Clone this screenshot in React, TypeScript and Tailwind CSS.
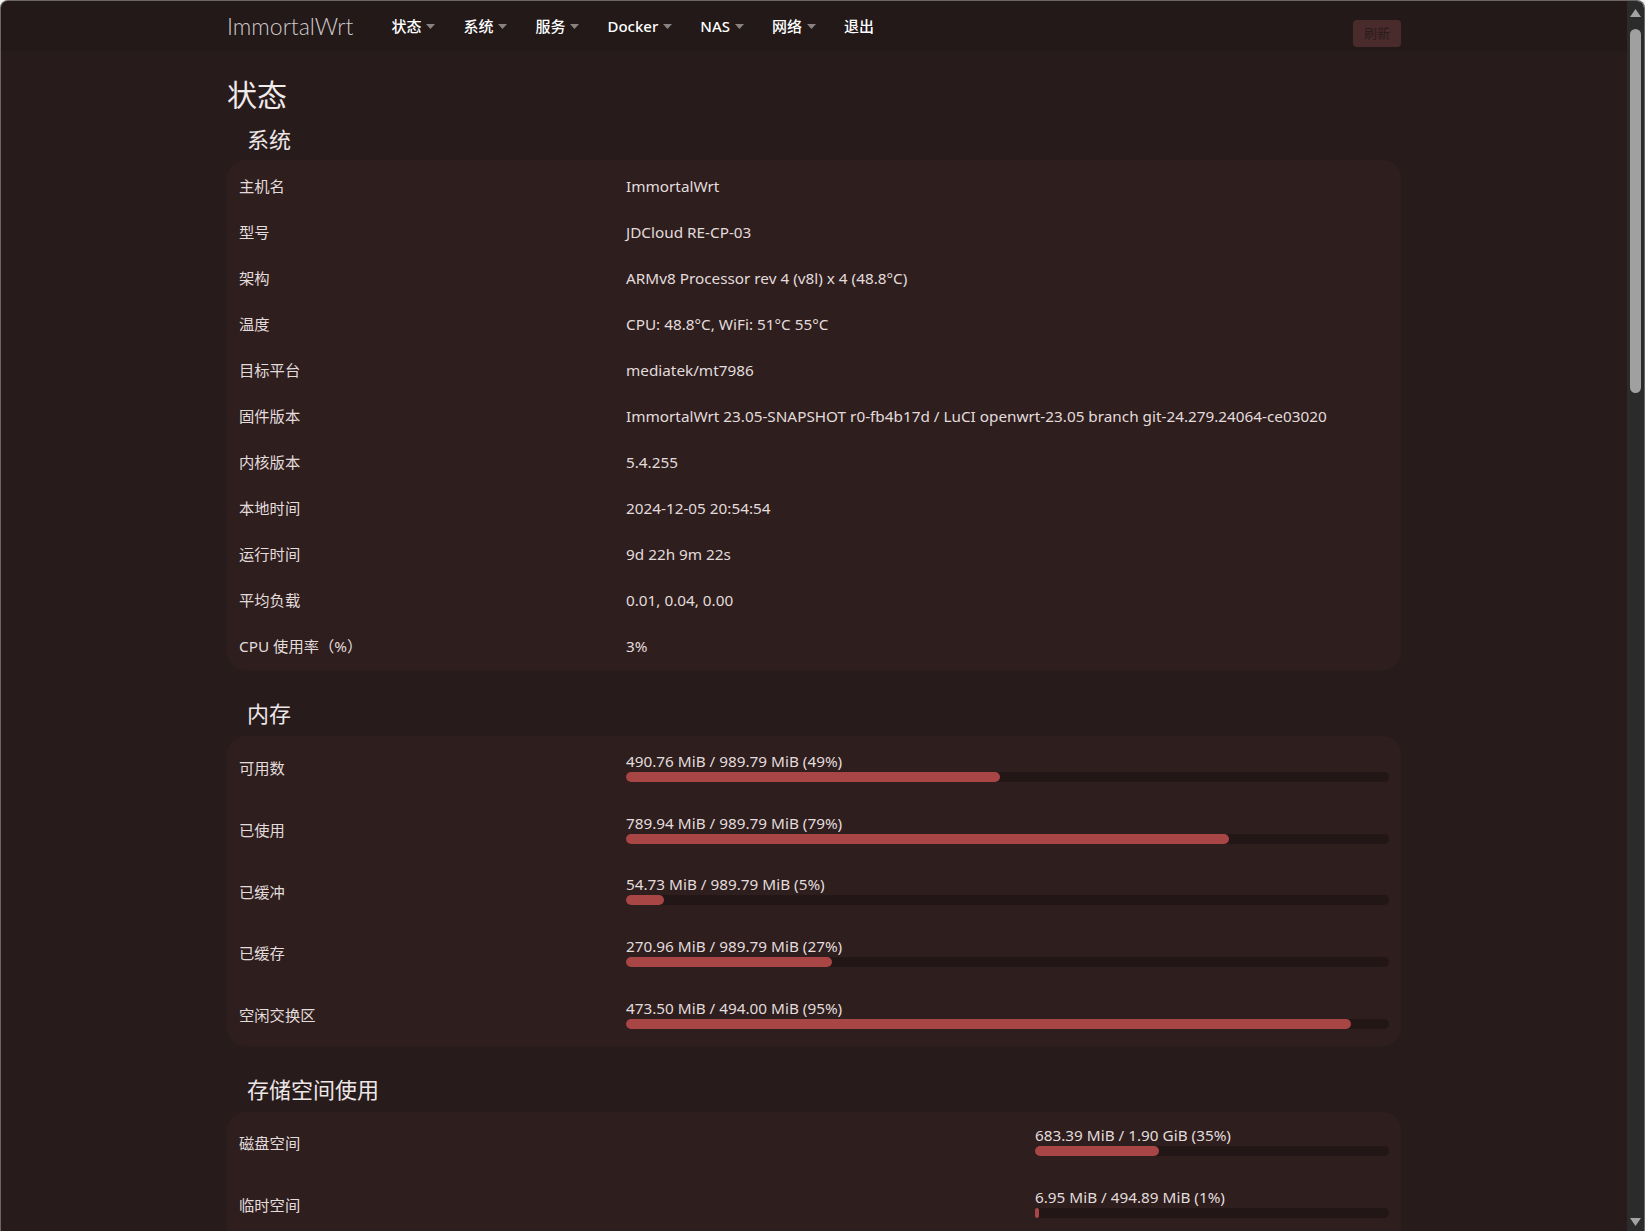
import React from "react";

type Row = { label: string; value: string };
type Bar = { label: string; text: string; pct: number };

const systemRows: Row[] = [
  { label: "主机名", value: "ImmortalWrt" },
  { label: "型号", value: "JDCloud RE-CP-03" },
  { label: "架构", value: "ARMv8 Processor rev 4 (v8l) x 4 (48.8°C)" },
  { label: "温度", value: "CPU: 48.8°C, WiFi: 51°C 55°C" },
  { label: "目标平台", value: "mediatek/mt7986" },
  {
    label: "固件版本",
    value:
      "ImmortalWrt 23.05-SNAPSHOT r0-fb4b17d / LuCI openwrt-23.05 branch git-24.279.24064-ce03020",
  },
  { label: "内核版本", value: "5.4.255" },
  { label: "本地时间", value: "2024-12-05 20:54:54" },
  { label: "运行时间", value: "9d 22h 9m 22s" },
  { label: "平均负载", value: "0.01, 0.04, 0.00" },
  { label: "CPU 使用率（%）", value: "3%" },
];

const memoryRows: Bar[] = [
  { label: "可用数", text: "490.76 MiB / 989.79 MiB (49%)", pct: 49 },
  { label: "已使用", text: "789.94 MiB / 989.79 MiB (79%)", pct: 79 },
  { label: "已缓冲", text: "54.73 MiB / 989.79 MiB (5%)", pct: 5 },
  { label: "已缓存", text: "270.96 MiB / 989.79 MiB (27%)", pct: 27 },
  { label: "空闲交换区", text: "473.50 MiB / 494.00 MiB (95%)", pct: 95 },
];

const storageRows: Bar[] = [
  { label: "磁盘空间", text: "683.39 MiB / 1.90 GiB (35%)", pct: 35 },
  { label: "临时空间", text: "6.95 MiB / 494.89 MiB (1%)", pct: 1 },
];

const navItems = ["状态", "系统", "服务", "Docker", "NAS", "网络"];

const Caret = () => (
  <svg width="9" height="5" viewBox="0 0 9 5" className="ml-[5px]">
    <path d="M0 0h9L4.5 5z" fill="#8a8282" />
  </svg>
);

const Progress = ({ item }: { item: Bar }) => (
  <div className="flex w-full flex-col pb-[4px]">
    <span className="leading-[20px]">{item.text}</span>
    <div className="mt-[1px] h-[10px] w-full rounded-full bg-[#221616]">
      <div
        className="h-full rounded-full bg-[#a84545]"
        style={{ width: `${Math.max(item.pct, 0.6)}%` }}
      />
    </div>
  </div>
);

const SectionTitle = ({ children, first }: { children: React.ReactNode; first?: boolean }) => (
  <h3
    className={
      (first ? "mt-[12px] mb-[7px]" : "mt-[29px] mb-[9px]") +
      " pl-[20px] text-[22px] leading-[28px] text-[#ece6e6]"
    }
  >
    {children}
  </h3>
);

const App = () => {
  return (
    <div className="h-[1231px] w-[1645px] overflow-hidden bg-[#f3f3f3] font-['Noto_Sans','Noto_Sans_CJK_SC',sans-serif]">
      <div className="flex h-full overflow-hidden rounded-t-[8px] border-x border-t border-[#6b6565]">
        <div className="flex-1 bg-[#281b1b] text-[15.3px] text-[#e2dcdc]">
          {/* top bar */}
          <div className="h-[50px] bg-[#231919]">
            <div className="mx-auto flex h-full w-[1174px] items-center">
              <span className="font-['Lato',sans-serif] text-[23px] font-light text-[#cfc9c9]">
                ImmortalWrt
              </span>
              <nav className="ml-[38px] flex items-center gap-[28px] text-[15px] font-medium text-white">
                {navItems.map((n) => (
                  <span key={n} className="flex items-center">
                    {n}
                    <Caret />
                  </span>
                ))}
                <span>退出</span>
              </nav>
              <button className="ml-auto self-start mt-[19px] h-[27px] w-[48px] rounded-[4px] bg-[#4a2b2b] text-[13px] text-[#2a1b1b]">
                刷新
              </button>
            </div>
          </div>

          <main className="mx-auto w-[1174px] pt-[26px]">
            <h2 className="text-[30px] leading-[36px] text-[#f0eaea]">状态</h2>

            <SectionTitle first>系统</SectionTitle>
            <div className="rounded-[18px] bg-[#2e1e1e] px-[12px] pt-[3px] pb-[1px]">
              {systemRows.map((r) => (
                <div key={r.label} className="flex h-[46px] items-center">
                  <div className="w-[387px] shrink-0">{r.label}</div>
                  <div>{r.value}</div>
                </div>
              ))}
            </div>

            <SectionTitle>内存</SectionTitle>
            <div className="rounded-[18px] bg-[#2e1e1e] px-[12px] pt-[2px]">
              {memoryRows.map((r) => (
                <div key={r.label} className="flex h-[61.6px] items-center">
                  <div className="w-[387px] shrink-0">{r.label}</div>
                  <Progress item={r} />
                </div>
              ))}
            </div>

            <SectionTitle>存储空间使用</SectionTitle>
            <div className="rounded-[18px] bg-[#2e1e1e] px-[12px] pb-[40px]">
              {storageRows.map((r) => (
                <div key={r.label} className="flex h-[62px] items-center">
                  <div className="w-[796px] shrink-0">{r.label}</div>
                  <Progress item={r} />
                </div>
              ))}
            </div>
          </main>
        </div>

        {/* scrollbar */}
        <div className="flex w-[17px] flex-col items-center bg-[#2b2b2b] pt-[8px]">
          <svg width="11" height="8" viewBox="0 0 11 8">
            <path d="M5.5 0L11 8H0z" fill="#a3a3a3" />
          </svg>
          <div className="mt-[12px] h-[364px] w-[11px] rounded-full bg-[#a0a0a0]" />
          <div className="flex-1" />
          <svg width="11" height="8" viewBox="0 0 11 8" className="mb-[5px]">
            <path d="M0 0h11L5.5 8z" fill="#a3a3a3" />
          </svg>
        </div>
      </div>
    </div>
  );
};

export default App;
